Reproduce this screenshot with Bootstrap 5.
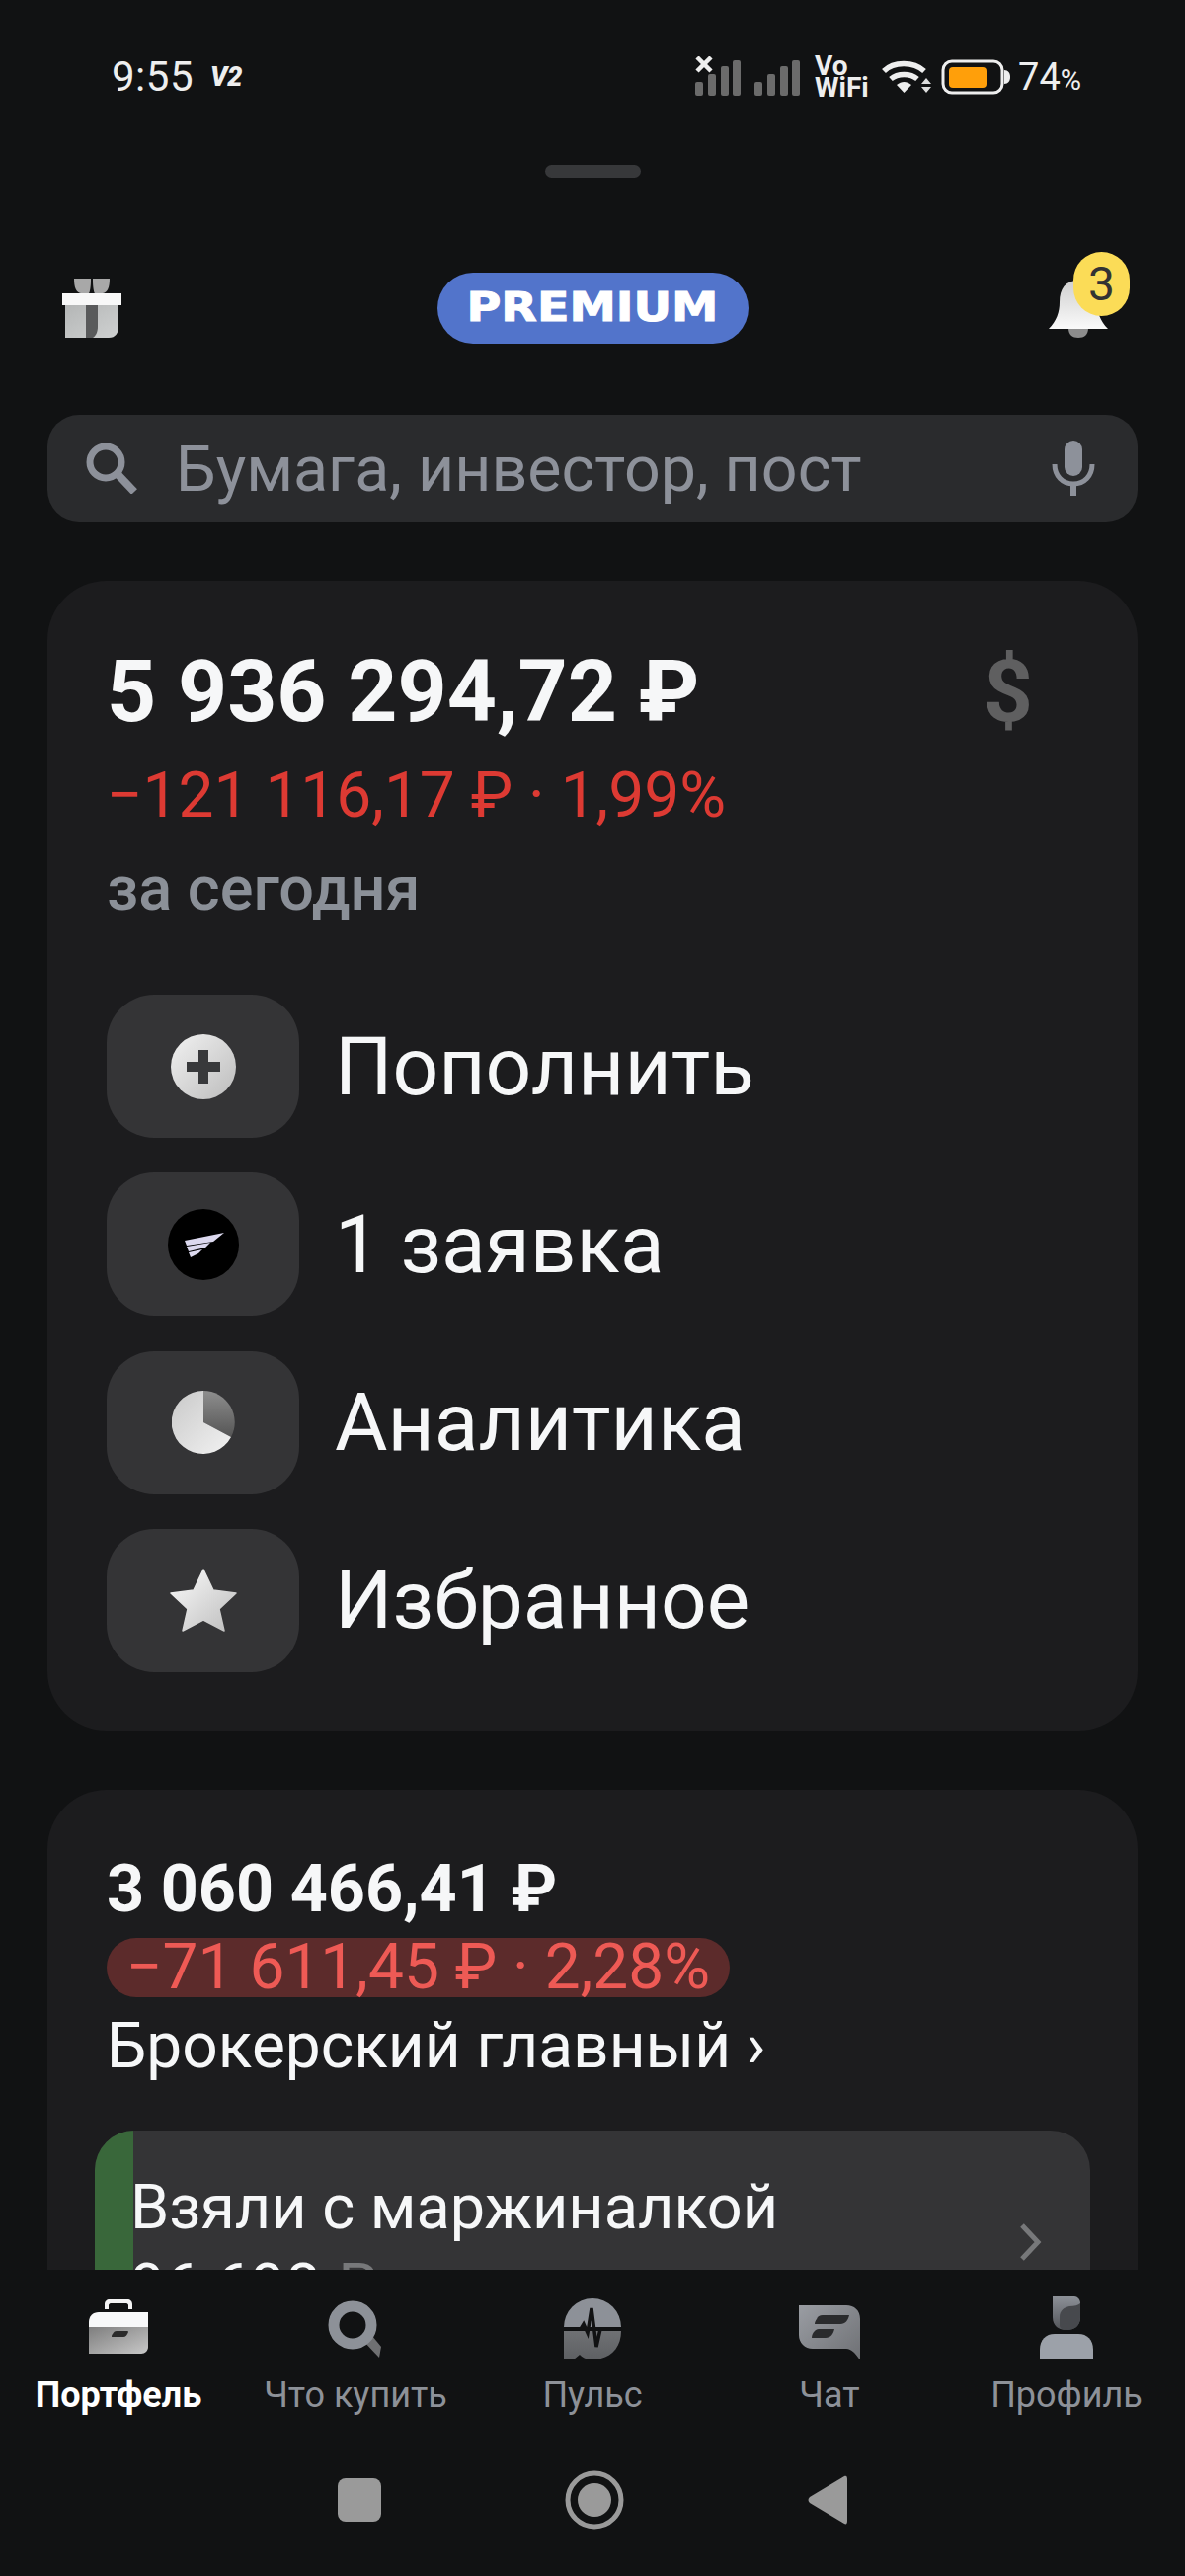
<!DOCTYPE html>
<html lang="ru">
<head>
  <meta charset="UTF-8">
  <meta name="viewport" content="width=device-width, initial-scale=1.0">
  <title>Портфель</title>
  <link href="https://cdn.jsdelivr.net/npm/bootstrap@5.3.0/dist/css/bootstrap.min.css" rel="stylesheet">
  <style>
    html, body { height: 100%; }
    body {
      background-color: #111213;
      color: #f6f7f8;
      font-family: Roboto, "Noto Sans", sans-serif;
      overflow: hidden;
    }
    .app-screen { height: 2608px; }
    .status-row { height: 156px; padding: 0 105px 0 113px; color: #eeeeee; }
    .status-time { font-size: 42px; line-height: 1; width: 100px; letter-spacing: .5px; }
    .status-v2 { font-size: 27px; font-weight: 900; font-style: italic; line-height: 1; }
    .vowifi { font-size: 28px; line-height: 22px; font-weight: 700; width: 56px; margin: 0 12px 0 15px; }
    .status-battery { margin-left: 10px; }
    .status-pct { font-size: 38px; line-height: 1; margin-left: 8px; }
    .status-pct span { font-size: 29px; }
    .sheet-handle { width: 97px; height: 13px; border-radius: 7px; background: #37383a; margin: 11px auto 0; }
    .top-row { margin-top: 96px; height: 72px; padding: 0 63px; }
    .top-side { flex: 1 1 0; }
    .premium-pill {
      width: 315px; height: 72px; border-radius: 36px; background: #5274cb;
      color: #fff; font-family: "DejaVu Sans", sans-serif; font-weight: 700; font-size: 41px;
    }
    .premium-pill span { display: inline-block; transform: scaleX(1.16); -webkit-text-stroke: 1px #fff; }
    .bell-wrap { width: 60px; height: 60px; margin-right: 15px; }
    .bell-count {
      position: absolute; left: 25px; top: -27px; width: 57px; height: 65px; border-radius: 29px;
      background: #fbdc57; color: #333; font-size: 48px; line-height: 1;
    }
    .search-field {
      margin: 72px 48px 0; height: 108px; border-radius: 32px; background: #2a2b2d;
      padding: 0 43px 0 38px; color: #8d919a; font-size: 64.5px;
    }
    .search-field span { margin-left: 36px; padding-top: 3px; }
    .scroll-area { flex: 1 1 0; min-height: 0; overflow: hidden; margin-top: 60px; padding: 0 48px; }
    .money-card { background: #1c1c1e; border-radius: 60px; }
    .total-card { height: 1164px; padding: 56px 60px 0; }
    .total-sum { font-size: 87.5px; font-weight: 700; line-height: 112px; }
    .total-dollar { font-size: 88px; font-weight: 700; line-height: 112px; color: #5f5f60; margin-right: 46px; }
    .total-diff { font-size: 64px; line-height: 80px; color: #dd3a33; margin-top: 10px; }
    .total-period { font-size: 63px; font-weight: 500; line-height: 80px; color: #8b9098; margin-top: 14px; }
    .action-list { margin-top: 67px; gap: 35.3px; }
    .action-tile { width: 195px; height: 145px; border-radius: 48px; background: #343436; }
    .action-name { font-size: 82px; line-height: 1; margin-left: 36px; }
    .account-card { margin-top: 60px; height: 800px; padding: 60px 48px 0; }
    .account-sum { font-size: 66.5px; font-weight: 700; line-height: 80px; margin-left: 12px; }
    .account-diff {
      display: inline-block; font-size: 64px; line-height: 60px; height: 60px; padding: 0 20px; margin: 10px 0 0 12px;
      border-radius: 30px; background: #5c2b2b; color: #ee5a55; white-space: nowrap;
    }
    .account-name { font-size: 64px; line-height: 80px; margin: 10px 0 0 12px; }
    .idea-row { margin-top: 45px; height: 226px; border-radius: 40px; background: #343436; overflow: hidden; }
    .idea-stripe { width: 39px; background: #39673a; }
    .idea-text { margin-left: -3px; }
    .idea-title { font-size: 63px; line-height: 80px; margin-top: 38px; }
    .idea-sum { font-size: 63px; line-height: 80px; }
    .idea-sum span { color: #77787a; }
    .tab-bar { height: 310px; background: #111213; }
    .tab-items { height: 148px; }
    .tab-cell { width: 240px; color: #8d9198; font-size: 36px; }
    .tab-cell.active-tab { color: #fff; font-weight: 700; }
    .tab-cell svg { height: 66px; width: 66px; }
    .tab-cell span { line-height: 42px; margin-top: 16px; }
    .system-keys { gap: 186px; margin-top: 55px; }
  </style>
</head>
<body>
  <div class="app-screen d-flex flex-column">

    <!-- status bar -->
    <div class="status-row d-flex align-items-center">
      <div class="status-time">9:55</div>
      <div class="status-v2">V2</div>
      <div class="ms-auto d-flex align-items-center">
        <svg width="106" height="42" viewBox="0 0 106 42" fill="#6b6b6b">
          <rect x="0" y="26" width="8" height="14" rx="2"/><rect x="13" y="18" width="8" height="22" rx="2"/><rect x="26" y="10" width="8" height="30" rx="2"/><rect x="38" y="4" width="8" height="36" rx="2"/>
          <rect x="60" y="26" width="8" height="14" rx="2"/><rect x="73" y="18" width="8" height="22" rx="2"/><rect x="86" y="10" width="8" height="30" rx="2"/><rect x="98" y="4" width="8" height="36" rx="2"/>
          <path d="M2 1l14 14M16 1L2 15" stroke="#eee" stroke-width="4.5" fill="none"/>
        </svg>
        <div class="vowifi"><div>Vo</div><div>WiFi</div></div>
        <svg width="50" height="38" viewBox="0 0 50 38" fill="none">
          <path d="M2 13C12 3 32 3 43 13M9 21c7-6 20-6 27 0" stroke="#eee" stroke-width="5.5"/>
          <path d="M15 27c5-4 10-4 15 0l-7.500 8z" fill="#eee"/>
          <path d="M45 20l5 6H40zM40 29h10l-5 6z" fill="#ddd"/>
        </svg>
        <svg class="status-battery" width="70" height="36" viewBox="0 0 70 36" fill="none">
          <rect x="2" y="2" width="60" height="32" rx="9" stroke="#eee" stroke-width="3"/>
          <rect x="8" y="8" width="38" height="21" rx="4" fill="#ff9f0a"/>
          <path d="M64 11c4 0 6 3 6 7s-2 7-6 7z" fill="#eee"/>
        </svg>
        <div class="status-pct">74<span>%</span></div>
      </div>
    </div>

    <div class="sheet-handle"></div>

    <!-- gift, premium, bell -->
    <div class="top-row d-flex align-items-center">
      <div class="top-side d-flex">
        <svg width="60" height="60" viewBox="0 0 60 60">
          <defs><linearGradient id="giftFill" x1="0" y1="0" x2="1" y2="1"><stop offset="0" stop-color="#b4b6b6"/><stop offset="1" stop-color="#cfd1d1"/></linearGradient></defs>
          <path d="M12 0h17v2c0 6-1 12-2 13H19C14 14 12 9 12 0zM48 0H31v2c0 6 1 12 2 13h8c5-1 7-6 7-15z" fill="#a8a8a8"/>
          <rect x="0" y="15" width="60" height="12" fill="#f8f8f8"/>
          <path d="M3 27h54v22c0 6-3 11-10 11H3z" fill="url(#giftFill)"/>
          <path d="M24 27h12v22c0 5-2 9-5 11h-7z" fill="#595a5b"/>
        </svg>
      </div>
      <div class="premium-pill d-flex align-items-center justify-content-center"><span>PREMIUM</span></div>
      <div class="top-side d-flex justify-content-end">
        <div class="bell-wrap position-relative">
          <svg width="60" height="60" viewBox="0 0 60 60">
            <defs><linearGradient id="bellFill" x1="0" y1="0" x2="0" y2="1"><stop offset="0" stop-color="#cfcfcf"/><stop offset="1" stop-color="#fafafa"/></linearGradient></defs>
            <path d="M20 50h20c0 7-4 10-10 10s-10-3-10-10z" fill="#8d8d8d"/>
            <path d="M30 2c-13 0-19 8-19 22 0 10-3 19-11 27h60c-8-8-11-17-11-27C49 10 43 2 30 2z" fill="url(#bellFill)"/>
          </svg>
          <div class="bell-count d-flex align-items-center justify-content-center">3</div>
        </div>
      </div>
    </div>

    <!-- search -->
    <div class="search-field d-flex align-items-center">
      <svg width="56" height="52" viewBox="0 0 56 52" fill="none" stroke="#8d919a">
        <circle cx="21" cy="20" r="16" stroke-width="7"/>
        <path d="M33 32l17 18" stroke-width="8"/>
      </svg>
      <span>Бумага, инвестор, пост</span>
      <svg class="ms-auto" width="44" height="56" viewBox="0 0 44 56" fill="#8d919a">
        <rect x="13" y="0" width="18" height="36" rx="9"/>
        <path d="M3 24c0 12 8 20 19 20s19-8 19-20" fill="none" stroke="#8d919a" stroke-width="5"/>
        <rect x="19" y="42" width="6" height="14"/>
      </svg>
    </div>

    <div class="scroll-area">
      <!-- total -->
      <div class="money-card total-card">
        <div class="d-flex justify-content-between">
          <div class="total-sum">5 936 294,72 ₽</div>
          <div class="total-dollar">$</div>
        </div>
        <div class="total-diff">−121 116,17 ₽ · 1,99%</div>
        <div class="total-period">за сегодня</div>

        <div class="action-list d-flex flex-column">
          <div class="d-flex align-items-center">
            <div class="action-tile d-flex align-items-center justify-content-center">
              <svg width="66" height="66" viewBox="0 0 66 66">
                <defs><linearGradient id="tileFill" x1="0" y1="0" x2="1" y2="1"><stop offset="0" stop-color="#f2f2f2"/><stop offset="1" stop-color="#bcbcbc"/></linearGradient></defs>
                <circle cx="33" cy="33" r="33" fill="url(#tileFill)"/>
                <path d="M28 16h10v12h12v10H38v12H28V38H16V28h12z" fill="#38393b"/>
              </svg>
            </div>
            <div class="action-name">Пополнить</div>
          </div>
          <div class="d-flex align-items-center">
            <div class="action-tile d-flex align-items-center justify-content-center">
              <svg width="72" height="72" viewBox="0 0 72 72">
                <circle cx="36" cy="36" r="36" fill="#000"/>
                <path d="M57 24L17 32l2 5 27-4zM19 38l24-4-5 5-17 4zM21 44l14-3-4 4-8 4z" fill="#dcd9ef"/>
              </svg>
            </div>
            <div class="action-name">1 заявка</div>
          </div>
          <div class="d-flex align-items-center">
            <div class="action-tile d-flex align-items-center justify-content-center">
              <svg width="64" height="64" viewBox="0 0 64 64">
                <defs>
                  <linearGradient id="pieLight" x1="0" y1="0" x2="1" y2="1"><stop offset="0" stop-color="#c9c9c9"/><stop offset="1" stop-color="#f2f2f2"/></linearGradient>
                  <linearGradient id="pieDark" x1="0" y1="0" x2="0" y2="1"><stop offset="0" stop-color="#8e8e8e"/><stop offset="1" stop-color="#555"/></linearGradient>
                </defs>
                <path d="M32 32V0a32 32 0 0 1 28 47z" fill="url(#pieDark)"/>
                <path d="M32 0a32 32 0 1 0 28 47L32 32z" fill="url(#pieLight)"/>
              </svg>
            </div>
            <div class="action-name">Аналитика</div>
          </div>
          <div class="d-flex align-items-center">
            <div class="action-tile d-flex align-items-center justify-content-center">
              <svg width="68" height="64" viewBox="0 0 68 64">
                <defs><linearGradient id="starFill" x1="0" y1="0" x2="1" y2="1"><stop offset="0" stop-color="#fbfbfb"/><stop offset="1" stop-color="#bdbdbd"/></linearGradient></defs>
                <path d="M34 1l10 21 23 3-17 16 5 22-21-11-21 11 5-22L1 25l23-3z" fill="url(#starFill)" stroke="url(#starFill)" stroke-linejoin="round" stroke-width="1.500"/>
              </svg>
            </div>
            <div class="action-name">Избранное</div>
          </div>
        </div>
      </div>

      <!-- account -->
      <div class="money-card account-card">
        <div class="account-sum">3 060 466,41 ₽</div>
        <div class="account-diff">−71 611,45 ₽ · 2,28%</div>
        <div class="account-name">Брокерский главный ›</div>
        <div class="idea-row d-flex">
          <div class="idea-stripe"></div>
          <div class="idea-text flex-grow-1">
            <div class="idea-title">Взяли с маржиналкой</div>
            <div class="idea-sum">96 698 <span>₽</span></div>
          </div>
          <div class="d-flex align-items-center pe-5">
            <svg width="24" height="38" viewBox="0 0 24 38" fill="none"><path d="M3 2l16 17L3 36" stroke="#77787a" stroke-width="5"/></svg>
          </div>
        </div>
      </div>
    </div>

    <!-- tabs and system keys -->
    <div class="tab-bar flex-shrink-0">
      <div class="tab-items d-flex align-items-end">
        <div class="tab-cell active-tab d-flex flex-column align-items-center">
          <svg viewBox="0 -3 66 66">
            <defs>
              <linearGradient id="caseLow" x1="0" y1="0" x2="1" y2="1"><stop offset="0" stop-color="#7e7e7e"/><stop offset="1" stop-color="#c8c8c8"/></linearGradient>
            </defs>
            <path d="M19 13V8c0-3 2-5 5-5h18c3 0 5 2 5 5v5h-4V9c0-1-1-2-2-2H25c-1 0-2 1-2 2v4z" fill="#f4f4f4"/>
            <path d="M13 16h50v15H3v-5c0-6 4-10 10-10z" fill="#f7f8f9"/>
            <path d="M3 31h60v20c0 4-3 7-7 7H3z" fill="url(#caseLow)"/>
            <path d="M27 38c1-2 2-3 4-3h11c1 0 1 1 1 1-1 3-3 5-5 5H26c0-1 0-2 1-3z" fill="#2a2a2a"/>
          </svg>
          <span>Портфель</span>
        </div>
        <div class="tab-cell d-flex flex-column align-items-center">
          <svg viewBox="0 -3 66 66" fill="none">
            <path d="M40 44l17 18 2-11-9-11z" fill="#6f7072"/>
            <circle cx="30" cy="29" r="19" stroke="#8d9198" stroke-width="11"/>
          </svg>
          <span>Что купить</span>
        </div>
        <div class="tab-cell d-flex flex-column align-items-center">
          <svg viewBox="0 -5 66 66">
            <defs><linearGradient id="pulseLow" x1="0" y1="0" x2="0" y2="1"><stop offset="0" stop-color="#6f7174"/><stop offset="1" stop-color="#5e6063"/></linearGradient></defs>
            <path d="M4 29a29 29 0 0 1 58 0z" fill="#8d9198"/>
            <path d="M4 33h58c0 18-12 29-29 29-7 0-10-2-13-5l-6 5H4z" fill="url(#pulseLow)"/>
            <path d="M4 31h17l3-5 4 9 4-25 5 39 4-18h21" fill="none" stroke="#111213" stroke-width="3.500"/>
          </svg>
          <span>Пульс</span>
        </div>
        <div class="tab-cell d-flex flex-column align-items-center">
          <svg viewBox="0 -6 66 66">
            <defs><linearGradient id="chatFill" x1="0" y1="0" x2="1" y2="1"><stop offset="0" stop-color="#9a9da3"/><stop offset="1" stop-color="#6e7074"/></linearGradient></defs>
            <path d="M2 6h48c8 0 14 5 14 14v42c-3-5-8-12-14-12H16C8 50 2 44 2 36z" fill="url(#chatFill)"/>
            <path d="M20 20c1-3 3-4 6-4h27c-1 5-4 9-9 9H18c0-2 1-4 2-5zM18 32c1-1 2-2 4-2h16c-1 5-4 9-9 9H15c0-3 1-5 3-7z" fill="#2a2b2d"/>
          </svg>
          <span>Чат</span>
        </div>
        <div class="tab-cell d-flex flex-column align-items-center">
          <svg viewBox="0 0 66 66">
            <defs><linearGradient id="headFill" x1="0" y1="0" x2="0" y2="1"><stop offset="0" stop-color="#8d9198"/><stop offset="1" stop-color="#53555a"/></linearGradient></defs>
            <path d="M19 3h22c3 0 6 3 6 7v14c0 9-6 13-14 13s-14-4-14-13z" fill="url(#headFill)"/>
            <path d="M26 24c0-7 5-10 10-11 5 0 9-1 11-3v14c0 9-6 13-14 13-4 0-7-1-7-5z" fill="#47494d"/>
            <path d="M6 66V57c0-10 6-16 15-16h24c9 0 15 6 15 16v9z" fill="#9ca1a9"/>
          </svg>
          <span>Профиль</span>
        </div>
      </div>

      <div class="system-keys d-flex justify-content-center align-items-center">
        <svg width="44" height="44" viewBox="0 0 44 44"><rect width="44" height="44" rx="8" fill="#9a9a9a"/></svg>
        <svg width="60" height="60" viewBox="0 0 60 60" fill="none"><circle cx="30" cy="30" r="27" stroke="#9a9a9a" stroke-width="5"/><circle cx="30" cy="30" r="17" fill="#9a9a9a"/></svg>
        <svg width="40" height="50" viewBox="0 0 40 50"><path d="M37 1c2-1 3 0 3 3v42c0 3-1 4-3 3L2 28c-2-2-2-4 0-6z" fill="#9a9a9a"/></svg>
      </div>
    </div>
  </div>

  <script src="https://cdn.jsdelivr.net/npm/bootstrap@5.3.0/dist/js/bootstrap.bundle.min.js"></script>
</body>
</html>
